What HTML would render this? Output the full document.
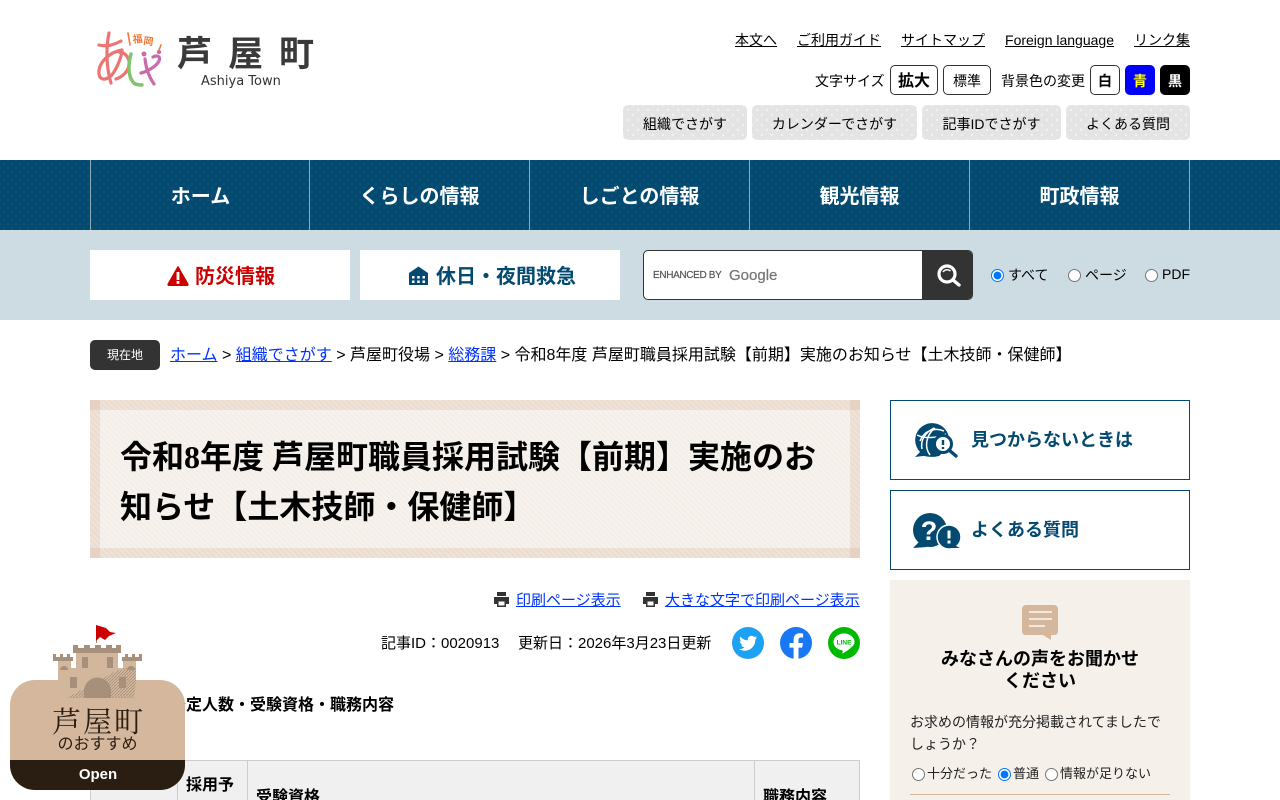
<!DOCTYPE html>
<html><head><meta charset="utf-8"><title>芦屋町</title>
<style>
*{box-sizing:border-box}
html,body{margin:0;padding:0;width:1280px;height:800px;overflow:hidden;background:#fff}
body{position:relative;font-family:"Liberation Sans","Noto Sans CJK JP",sans-serif;font-size:16px;color:#000}
.a{position:absolute;white-space:nowrap}
a{color:#0033ff;text-decoration:underline}
.top a{color:#000;font-size:14px}
.btn{position:absolute;top:65px;height:30px;border:1px solid #333;border-radius:5px;background:#fff;text-align:center;line-height:31px;font-size:14px}
.dot{position:absolute;top:105px;height:35px;border-radius:5px;background-color:#e4e4e4;background-image:radial-gradient(circle,#f0f0f0 1px,transparent 1.4px),radial-gradient(circle,#f0f0f0 1px,transparent 1.4px);background-size:10px 10px;background-position:0 0,5px 5px;text-align:center;line-height:38px;font-size:14px}
.nav{position:absolute;left:0;top:160px;width:1280px;height:70px;background-color:#044a70;background-image:radial-gradient(circle,#0b5379 1px,transparent 1.4px),radial-gradient(circle,#0b5379 1px,transparent 1.4px);background-size:8px 8px;background-position:0 0,4px 4px}
.nav div{position:absolute;top:0;height:70px;width:220px;border-left:1px solid #8fa9b8;color:#fff;font-weight:bold;font-size:20px;text-align:center;line-height:75px}
.side{position:absolute;left:890px;width:300px;height:80px;border:1px solid #044a70;background:#fff;color:#044a70;font-weight:bold;font-size:18px}
td,th{border:1px solid #ccc}
</style></head><body>

<!-- logo -->
<svg class="a" style="left:95px;top:28px" width="70" height="62" viewBox="0 0 70 62" fill="none">
<g stroke="#ee7474" stroke-width="3.2" stroke-linecap="round" fill="none">
<path d="M4 17c8 2 14 0 22-4"/><path d="M14 5c-3 14-3 34 2 50"/><path d="M27 22c-12 2-24 12-23 24 1 8 10 6 15-2 5-8 8-18 8-22"/><path d="M24 24c6 0 11 6 10 13-1 7-7 12-13 14"/>
</g>
<path d="M36 26c-3 10-3 22 2 28 2 3 6 3 9 3" stroke="#7dc46b" stroke-width="3.4" stroke-linecap="round"/>
<g stroke="#c86bab" stroke-width="3.2" stroke-linecap="round" fill="none">
<path d="M46 45c5-1 15-6 18-12 2-5-2-6-6-4"/><path d="M50 31c1 9 4 18 9 25"/>
</g>
<circle cx="49" cy="26" r="2.500" fill="#c86bab"/><circle cx="64" cy="24" r="2.200" fill="#c86bab"/>
<path d="M33 5l2 12M66 17l-2 5" stroke="#f07a3a" stroke-width="1.600" stroke-linecap="round"/>
<text x="38" y="15" font-size="10" font-weight="bold" fill="#f07a3a" transform="rotate(-6 38 15)">福</text>
<text x="48" y="16" font-size="10" font-weight="bold" fill="#f07a3a" transform="rotate(8 48 16)">岡</text>
</svg>
<div class="a" style="left:177px;top:30px;width:140px;font-size:35px;line-height:44px;font-weight:bold;letter-spacing:16px;color:#3a3a3a;font-family:'Noto Sans CJK JP',sans-serif">芦屋町</div>
<div class="a" style="left:201px;top:73px;line-height:17px;color:#333;font-family:'DejaVu Sans','Liberation Sans',sans-serif;font-size:13px">Ashiya Town</div>

<!-- top links -->
<div class="a top" style="right:90px;top:31px;line-height:18px">
<a href="#">本文へ</a><a href="#" style="margin-left:20px">ご利用ガイド</a><a href="#" style="margin-left:20px">サイトマップ</a><a href="#" style="margin-left:20px">Foreign language</a><a href="#" style="margin-left:20px">リンク集</a>
</div>
<div class="a" style="left:815px;top:72px;font-size:14px;line-height:18px">文字サイズ</div>
<div class="btn" style="left:890px;width:48px;font-size:16px;font-weight:bold">拡大</div>
<div class="btn" style="left:943px;width:48px">標準</div>
<div class="a" style="left:1001px;top:72px;font-size:14px;line-height:18px">背景色の変更</div>
<div class="btn" style="left:1090px;width:30px;font-weight:bold">白</div>
<div class="btn" style="left:1125px;width:30px;background:#00f;border-color:#00f;color:#ff0;font-weight:bold">青</div>
<div class="btn" style="left:1160px;width:30px;background:#000;border-color:#000;color:#fff;font-weight:bold">黒</div>
<div class="dot" style="left:623px;width:124px">組織でさがす</div>
<div class="dot" style="left:752px;width:165px">カレンダーでさがす</div>
<div class="dot" style="left:922px;width:139px">記事IDでさがす</div>
<div class="dot" style="left:1066px;width:124px">よくある質問</div>

<!-- nav -->
<div class="nav">
<div style="left:90px">ホーム</div><div style="left:309px">くらしの情報</div><div style="left:529px">しごとの情報</div><div style="left:749px">観光情報</div><div style="left:969px;width:221px;border-right:1px solid #8fa9b8">町政情報</div>
</div>

<!-- band -->
<div class="a" style="left:0;top:230px;width:1280px;height:90px;background:#cddbe3"></div>
<div class="a" style="left:90px;top:250px;width:260px;height:50px;background:#fff;color:#c00;font-weight:bold;font-size:20px;line-height:55px;padding-left:105px">防災情報</div>
<svg class="a" style="left:166px;top:264px" width="24" height="23" viewBox="0 0 24 23"><path d="M12 2.500L2 20Q1.500 21.500 3 21.500H21Q22.500 21.500 22 20Z" fill="#c00" stroke="#c00" stroke-linejoin="round"/><rect x="10.600" y="8" width="2.800" height="8" fill="#fff"/><rect x="10.600" y="17" width="2.800" height="2.800" fill="#fff"/></svg>
<div class="a" style="left:360px;top:250px;width:260px;height:50px;background:#fff;color:#044a70;font-weight:bold;font-size:20px;line-height:55px;padding-left:76px">休日・夜間救急</div>
<svg class="a" style="left:408px;top:266px" width="21" height="20" viewBox="0 0 21 20"><path d="M1 19V7L10.500 0.500 20 7V19Z" fill="#044a70"/><g fill="#fff"><rect x="4" y="10" width="2.500" height="2.500"/><rect x="9.200" y="10" width="2.500" height="2.500"/><rect x="14.500" y="10" width="2.500" height="2.500"/><rect x="4" y="14.500" width="2.500" height="2.500"/><rect x="9.200" y="14.500" width="2.500" height="2.500"/><rect x="14.500" y="14.500" width="2.500" height="2.500"/></g></svg>

<div class="a" style="left:643px;top:250px;width:330px;height:50px;background:#fff;border:1px solid #333;border-radius:5px;overflow:hidden">
<div class="a" style="left:9px;top:18px;font-size:10px;line-height:13px;color:#555;letter-spacing:-.35px;-webkit-text-stroke:.2px #555">ENHANCED BY</div>
<div class="a" style="left:85px;top:14px;line-height:21px;color:#757575;font-size:15px;-webkit-text-stroke:.2px #757575">Google</div>
<div class="a" style="left:278px;top:-1px;width:52px;height:50px;background:#333"></div>
<svg class="a" style="left:290px;top:11px" width="28" height="28" viewBox="0 0 28 28" fill="none"><circle cx="13" cy="12" r="8" stroke="#fff" stroke-width="3.200"/><path d="M9 10c1.500-2.500 5-3 7.500-1" stroke="#fff" stroke-width="1.500"/><path d="M19 18l6 5" stroke="#fff" stroke-width="3.400" stroke-linecap="round"/></svg>
</div>
<input type="radio" name="r" checked class="a" style="left:991px;top:269px;margin:0;width:13px;height:13px">
<div class="a" style="left:1008px;top:265px;font-size:14px;line-height:20px">すべて</div>
<input type="radio" name="r" class="a" style="left:1068px;top:269px;margin:0;width:13px;height:13px">
<div class="a" style="left:1085px;top:265px;font-size:14px;line-height:20px">ページ</div>
<input type="radio" name="r" class="a" style="left:1145px;top:269px;margin:0;width:13px;height:13px">
<div class="a" style="left:1162px;top:264px;font-size:14px;line-height:20px">PDF</div>

<!-- breadcrumb -->
<div class="a" style="left:90px;top:340px;width:70px;height:30px;background:#333;border-radius:5px;color:#fff;font-size:12px;text-align:center;line-height:30px">現在地</div>
<div class="a" style="left:170px;top:345px;line-height:22px;font-size:16px"><a href="#">ホーム</a> &gt; <a href="#">組織でさがす</a> &gt; 芦屋町役場 &gt; <a href="#">総務課</a> &gt; 令和8年度 芦屋町職員採用試験【前期】実施のお知らせ【土木技師・保健師】</div>

<!-- title -->
<div class="a" style="left:90px;top:400px;width:770px;height:158px;background-color:#eddfd4;background-image:repeating-linear-gradient(45deg,#ebdcd0 0 2px,#efe3d9 2px 4px)"></div>
<div class="a" style="left:90px;top:400px;width:10px;height:10px;background:#e6d2c2"></div>
<div class="a" style="left:850px;top:400px;width:10px;height:10px;background:#e6d2c2"></div>
<div class="a" style="left:90px;top:548px;width:10px;height:10px;background:#e6d2c2"></div>
<div class="a" style="left:850px;top:548px;width:10px;height:10px;background:#e6d2c2"></div>
<div class="a" style="left:100px;top:410px;width:750px;height:138px;background-color:#f5f0ea;background-image:repeating-linear-gradient(45deg,#f6f1ec 0 3px,#f1ece5 3px 4px)"></div>
<div class="a" style="left:120px;top:432px;width:710px;white-space:normal;font-family:'Liberation Serif','Noto Sans CJK JP',serif;font-weight:bold;font-size:32px;line-height:50px">令和8年度 芦屋町職員採用試験【前期】実施のお知らせ【土木技師・保健師】</div>

<!-- print -->
<svg class="a" style="left:493px;top:591px" width="17" height="17" viewBox="0 0 17 17"><path d="M4 1h9v4H4zM1 6h15v7h-3v3H4v-3H1z" fill="#333"/><path d="M5.500 10.500h6v4h-6z" fill="#fff"/></svg>
<div class="a" style="left:516px;top:591px;font-size:15px;line-height:20px"><a href="#">印刷ページ表示</a></div>
<svg class="a" style="left:642px;top:591px" width="17" height="17" viewBox="0 0 17 17"><path d="M4 1h9v4H4zM1 6h15v7h-3v3H4v-3H1z" fill="#333"/><path d="M5.500 10.500h6v4h-6z" fill="#fff"/></svg>
<div class="a" style="left:665px;top:591px;font-size:15px;line-height:20px"><a href="#">大きな文字で印刷ページ表示</a></div>

<div class="a" style="left:381px;top:634px;font-size:15px;line-height:20px">記事ID：0020913</div>
<div class="a" style="left:518px;top:634px;font-size:15px;line-height:20px">更新日：2026年3月23日更新</div>
<svg class="a" style="left:732px;top:627px" width="32" height="32" viewBox="0 0 32 32"><circle cx="16" cy="16" r="16" fill="#1da1f2"/><path d="M25 10.500c-.7.300-1.400.5-2.100.6.800-.5 1.300-1.200 1.600-2-.7.400-1.500.7-2.300.9a3.700 3.700 0 0 0-6.300 3.400c-3-.2-5.700-1.600-7.500-3.800-1 1.700-.5 3.800 1.100 4.900-.6 0-1.200-.2-1.700-.5 0 1.800 1.300 3.300 3 3.700-.5.100-1.100.2-1.700.1.500 1.500 1.900 2.500 3.500 2.600A7.500 7.500 0 0 1 7 22c1.700 1.100 3.700 1.700 5.700 1.700 6.900 0 10.800-5.800 10.600-11.100.7-.5 1.300-1.200 1.700-2.100z" fill="#fff"/></svg>
<svg class="a" style="left:780px;top:627px" width="32" height="32" viewBox="0 0 32 32"><circle cx="16" cy="16" r="16" fill="#1877f2"/><path d="M22.200 20.600l.7-4.600h-4.400v-3c0-1.300.6-2.500 2.600-2.500h2V6.600s-1.800-.3-3.500-.3c-3.600 0-6 2.200-6 6.100V16H9.500v4.600h4.100V32h4.900V20.600z" fill="#fff"/></svg>
<svg class="a" style="left:828px;top:627px" width="32" height="32" viewBox="0 0 32 32"><circle cx="16" cy="16" r="16" fill="#00b900"/><path d="M16 6.500c-5.800 0-10.500 3.800-10.500 8.500 0 4.200 3.700 7.700 8.700 8.400.9.200.6 1-.1 3.200 1-.3 5.800-3.100 8.400-5.600 2.600-2 4-3.800 4-6 0-4.700-4.700-8.500-10.500-8.500z" fill="#fff"/><text x="16" y="17.500" font-size="6.500" font-weight="bold" fill="#00b900" text-anchor="middle">LINE</text></svg>

<!-- content -->
<div class="a" style="left:138px;top:695px;font-weight:bold;font-size:16px;line-height:22px">採用予定人数・受験資格・職務内容</div>
<div class="a" style="left:90px;top:760px;width:770px;height:40px;overflow:hidden">
<table style="width:770px;border-collapse:collapse;table-layout:fixed;background:#f0f0f0;font-size:16px;font-weight:bold">
<tr style="height:90px">
<td style="width:87px;padding:8px"></td>
<td style="width:70px;padding:12px 8px;vertical-align:top;line-height:25px;white-space:normal">採用予定</td>
<td style="width:507px;padding:8px;padding-top:26px;vertical-align:top;line-height:22px">受験資格</td>
<td style="padding:8px;padding-top:26px;vertical-align:top;line-height:22px">職務内容</td>
</tr></table></div>

<!-- sidebar -->
<div class="side" style="top:400px"><div class="a" style="left:80px;top:27px;line-height:24px">見つからないときは</div>
<svg class="a" style="left:22px;top:20px" width="46" height="40" viewBox="0 0 46 40" fill="none"><path d="M2 36l5-5A17 17 0 1 1 33 29l-7 6c-8 2-13 0-16 0z" fill="#044a70"/><g stroke="#fff" stroke-width="1.500"><path d="M7 20c4-10 14-14 24-10M9 28c-2-9 4-17 12-21M17 34c-6-8-4-20 5-27M4 14c8 4 20 3 29-1"/></g><circle cx="30" cy="23" r="8.500" fill="#fff" stroke="#044a70" stroke-width="3"/><path d="M30 19v5M30 26v2" stroke="#044a70" stroke-width="2.400"/><path d="M36 29l7 6" stroke="#044a70" stroke-width="3.400" stroke-linecap="round"/></svg>
</div>
<div class="side" style="top:490px"><div class="a" style="left:80px;top:27px;line-height:24px">よくある質問</div>
<svg class="a" style="left:21px;top:20px" width="50" height="40" viewBox="0 0 50 40"><circle cx="18" cy="19" r="17" fill="#044a70"/><path d="M1 37l6-6 8 5z" fill="#044a70"/><text x="17" y="29" font-size="27" font-weight="bold" fill="#fff" text-anchor="middle">?</text><circle cx="37" cy="26" r="12" fill="#044a70" stroke="#fff" stroke-width="1.500"/><path d="M42 34l6 3-10 0z" fill="#044a70"/><path d="M37 19.500v8M37 29.500v3" stroke="#fff" stroke-width="3"/></svg>
</div>

<div class="a" style="left:890px;top:580px;width:300px;height:220px;background:#f5f0ea"></div>
<svg class="a" style="left:1021px;top:604px" width="39" height="37" viewBox="0 0 39 37"><path d="M5 1h28a4 4 0 0 1 4 4v23a4 4 0 0 1-4 3h-3v5l-8-5H5a4 4 0 0 1-4-3V5a4 4 0 0 1 4-4z" fill="#d5b79d"/><path d="M8 8h23M8 15h23M8 22h16" stroke="#f5f0ea" stroke-width="1.800"/></svg>
<div class="a" style="left:890px;top:648px;width:300px;text-align:center;font-weight:bold;font-size:18px;line-height:22px;white-space:normal">みなさんの声をお聞かせ<br>ください</div>
<div class="a" style="left:910px;top:711px;width:262px;white-space:normal;font-size:14px;line-height:22px;color:#222">お求めの情報が充分掲載されてましたでしょうか？</div>
<input type="radio" name="q" class="a" style="left:912px;top:768px;margin:0;width:13px;height:13px">
<div class="a" style="left:927px;top:764px;font-size:13px;line-height:20px;color:#222">十分だった</div>
<input type="radio" name="q" checked class="a" style="left:998px;top:768px;margin:0;width:13px;height:13px">
<div class="a" style="left:1013px;top:764px;font-size:13px;line-height:20px;color:#222">普通</div>
<input type="radio" name="q" class="a" style="left:1045px;top:768px;margin:0;width:13px;height:13px">
<div class="a" style="left:1060px;top:764px;font-size:13px;line-height:20px;color:#222">情報が足りない</div>
<div class="a" style="left:910px;top:794px;width:260px;height:1px;background:#d5b79d"></div>

<!-- floating -->
<div class="a" style="left:10px;top:680px;width:175px;height:110px;background:#d5b79d;border-radius:25px;overflow:hidden">
<div class="a" style="left:1px;top:26px;width:175px;text-align:center;font-family:'Noto Serif CJK JP','Noto Serif CJK SC',serif;font-size:29px;line-height:30px;color:#2a1d12;letter-spacing:2px">芦屋町</div>
<div class="a" style="left:0;top:55px;width:175px;text-align:center;font-size:16px;line-height:20px;color:#2a1d12">のおすすめ</div>
<div class="a" style="left:0;top:80px;width:175px;height:30px;background:#2a1d12"></div>
<div class="a" style="left:.5px;top:80px;width:175px;height:30px;color:#fff;font-weight:bold;font-size:15px;text-align:center;line-height:29px">Open</div>
</div>
<svg class="a" style="left:0;top:620px" width="190" height="85" viewBox="0 620 190 85">
<defs><pattern id="h" width="3" height="3" patternUnits="userSpaceOnUse"><rect width="3" height="3" fill="#d3b79d"/><path d="M0 3L3 0" stroke="#a68f7b" stroke-width=".8"/></pattern></defs>
<path d="M58 661h13v7h5v-15h42v15h5v-7h13v22l-2 15H58z" fill="#d3b79d"/>
<path d="M67 698l51-28h5v-2h13v14l-2 16z" fill="url(#h)"/>
<path d="M96 625h1v18h-1z" fill="#a68f7b"/>
<path d="M96 625l10 3 4 4 6 1-7 3-4 4-5-3-4 4z" fill="#c00"/>
<path d="M73 653v-8h5v3h6v-3h6v3h5v-3h6v3h5v-3h6v3h4v-3h5v8z" fill="#a68f7b"/>
<path d="M53 661v-7h3v3h4v-3h3v3h4v-3h3v3h3v4zM122 661v-4h3v-3h3v3h4v-3h3v3h4v-3h3v7z" fill="#a68f7b"/>
<rect x="82" y="657" width="6" height="11" fill="#a68f7b"/><rect x="107" y="657" width="6" height="11" fill="#a68f7b"/>
<rect x="70" y="677" width="7" height="11" fill="#a68f7b"/><rect x="119" y="677" width="7" height="11" fill="#a68f7b"/>
<path d="M60 670a4 4 0 0 1 8 0zM127 670a4 4 0 0 1 8 0z" fill="#a68f7b"/>
<path d="M84 698v-7a13.500 13.500 0 0 1 27 0v7z" fill="#a68f7b"/>
</svg>
</body></html>
